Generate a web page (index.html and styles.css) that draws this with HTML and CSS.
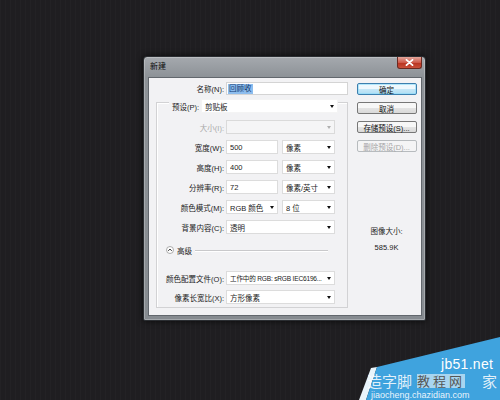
FILE: index.html
```html
<!DOCTYPE html>
<html lang="zh-CN">
<head>
<meta charset="utf-8">
<title>新建</title>
<link rel="stylesheet" href="styles.css">
</head>
<body>
<div class="desktop">
  <div class="dialog">
    <div class="titlebar">
      <span class="title">新建</span>
      <span class="close"><svg width="9" height="7" viewBox="0 0 9 7"><path d="M1.5 0.8 L7.5 6.2 M7.5 0.8 L1.5 6.2" stroke="#fff" stroke-width="1.8" stroke-linecap="round"/></svg></span>
    </div>
    <div class="client">
      <div class="form">
        <div class="name-row">
          <span class="lbl name-lbl">名称(N):</span>
          <div class="field name-field"><span class="hl">回顾收</span></div>
        </div>
        <div class="group">
          <div class="preset-row">
            <span class="preset-lbl">预设(P):</span>
            <div class="field select preset-select"><span class="val">剪贴板</span><i class="arrow"></i></div>
          </div>
          <div class="row first">
            <span class="lbl disabled">大小(I):</span>
            <div class="field select w109 off"><span class="val"></span><i class="arrow grey"></i></div>
          </div>
          <div class="row">
            <span class="lbl">宽度(W):</span>
            <div class="field w52"><span class="val">500</span></div>
            <div class="field select w53"><span class="val">像素</span><i class="arrow"></i></div>
          </div>
          <div class="row">
            <span class="lbl">高度(H):</span>
            <div class="field w52"><span class="val">400</span></div>
            <div class="field select w53"><span class="val">像素</span><i class="arrow"></i></div>
          </div>
          <div class="row">
            <span class="lbl">分辨率(R):</span>
            <div class="field w52"><span class="val">72</span></div>
            <div class="field select w53"><span class="val">像素/英寸</span><i class="arrow"></i></div>
          </div>
          <div class="row">
            <span class="lbl">颜色模式(M):</span>
            <div class="field select w52"><span class="val">RGB 颜色</span><i class="arrow"></i></div>
            <div class="field select w53"><span class="val">8 位</span><i class="arrow"></i></div>
          </div>
          <div class="row">
            <span class="lbl">背景内容(C):</span>
            <div class="field select w109"><span class="val">透明</span><i class="arrow"></i></div>
          </div>
          <div class="adv">
            <span class="adv-icon"><svg width="8" height="8" viewBox="0 0 8 8"><circle cx="4" cy="4" r="3.5" fill="#fff" stroke="#9a9a9a" stroke-width="0.8"/><path d="M2.3 4.8 L4 3.1 L5.7 4.8" fill="none" stroke="#222" stroke-width="1"/></svg></span>
            <span class="adv-text">高级</span>
            <span class="adv-line"></span>
          </div>
          <div class="row profile">
            <span class="lbl">颜色配置文件(O):</span>
            <div class="field select w109"><span class="val tight">工作中的 RGB: sRGB IEC6196...</span><i class="arrow"></i></div>
          </div>
          <div class="row aspect">
            <span class="lbl">像素长宽比(X):</span>
            <div class="field select w109"><span class="val">方形像素</span><i class="arrow"></i></div>
          </div>
        </div>
      </div>
      <div class="side">
        <div class="btn default">确定</div>
        <div class="btn">取消</div>
        <div class="btn">存储预设(S)...</div>
        <div class="btn off">删除预设(D)...</div>
        <div class="info">图像大小:</div>
        <div class="info size">585.9K</div>
      </div>
    </div>
  </div>
</div>
<div class="wm">
  <svg class="wm-shape" width="145" height="65" viewBox="0 0 145 65">
    <polygon points="4,65 16,33 22,32 11,65" fill="#e9f4fb"/>
    <polygon points="11,65 22,32 145,2 145,65" fill="#3fa3de"/>
  </svg>
  <span class="wm-url">jb51.net</span>
  <span class="wm-big">造字脚</span>
  <span class="wm-mid">教程网</span>
  <span class="wm-big2">家</span>
  <span class="wm-small">jiaocheng.chazidian.com</span>
</div>
</body>
</html>
```

FILE: styles.css
```css
* { box-sizing: border-box; margin: 0; padding: 0; }
html, body { width: 500px; height: 400px; overflow: hidden; }
body {
  position: relative;
  background-color: #1f1e21;
  background-image: repeating-linear-gradient(90deg, rgba(255,255,255,0.018) 0 1px, transparent 1px 5px);
  font-family: "Liberation Sans", "Noto Sans CJK SC", sans-serif;
  font-size: 7.5px;
  color: #1c1c1c;
}
.desktop { padding: 56px 0 0 143px; }
.dialog {
  width: 283px;
  height: 265px;
  border: 1px solid #2a2d31;
  border-radius: 4px 4px 2px 2px;
  background: linear-gradient(#a5a9ae, #8d9297 20px, #868b90);
  padding: 0 3px 4px 4px;
  display: flex;
  flex-direction: column;
  box-shadow: 0 0 6px rgba(0,0,0,0.7), inset 0 0 0 1px rgba(255,255,255,0.25);
}
.titlebar {
  height: 20px;
  display: flex;
  justify-content: space-between;
  align-items: flex-start;
  padding-left: 2px;
}
.title { line-height: 19px; font-size: 8px; color: #0c0c0c; }
.close {
  width: 25px;
  height: 12px;
  display: flex;
  align-items: center;
  justify-content: center;
  background: linear-gradient(#e3a79c, #cf5a4a 50%, #b8321f 51%, #c9503a);
  border: 1px solid #6a2a22;
  border-top: none;
  border-radius: 0 0 3px 3px;
}
.client {
  flex: 1;
  display: flex;
  background: #f2f2f4;
  border: 1px solid #62676d;
}
.form { width: 203px; }
.name-row {
  display: flex;
  align-items: center;
  height: 13px;
  margin-top: 4px;
}
.lbl { text-align: right; margin-right: 2px; white-space: nowrap; }
.name-lbl { width: 75px; }
.field {
  height: 14px;
  background: #fff;
  border: 1px solid #dcdcdc;
  display: flex;
  align-items: center;
  padding: 0 3px;
  white-space: nowrap;
  overflow: hidden;
}
.val { flex: 1; min-width: 0; overflow: hidden; white-space: nowrap; }
.val.tight { font-size: 6.6px; letter-spacing: -0.2px; }
.name-field { width: 122px; height: 13px; border-color: #d4d4d4; padding-left: 1px; }
.hl { background: #8dbdee; color: #123a6e; padding: 0 1px; line-height: 10px; }
.select { justify-content: space-between; }
.arrow {
  flex: none;
  width: 0;
  height: 0;
  margin-left: 2px;
  border-left: 2.5px solid transparent;
  border-right: 2.5px solid transparent;
  border-top: 3px solid #111;
}
.arrow.grey { border-top-color: #b0b0b0; }
.group {
  margin: 7px 0 0 7px;
  width: 192px;
  height: 206px;
  border: 1px solid #d2d2d4;
  box-shadow: inset 1px 1px 0 #fff;
}
.preset-row {
  display: flex;
  align-items: center;
  height: 14px;
  margin-top: -4px;
  padding-left: 12px;
}
.preset-lbl { width: 32px; background: #f2f2f4; padding-left: 3px; white-space: nowrap; }
.preset-select { width: 137px; border-color: #f4f4f4; }
.row { display: flex; align-items: center; height: 14px; margin-top: 6px; }
.row .lbl { width: 67px; }
.row.first { margin-top: 7px; }
.row.profile { margin-top: 14px; }
.row.aspect { margin-top: 5px; }
.disabled { color: #a8a8a8; }
.off { background: #f5f5f6; border-color: #dadada; color: #a8a8a8; }
.w52 { width: 52px; }
.w53 { width: 53px; margin-left: 4px; }
.w109 { width: 109px; }
.adv {
  display: flex;
  align-items: center;
  height: 14px;
  margin-top: 9px;
  padding-left: 9px;
  padding-right: 19px;
}
.adv-icon { display: flex; width: 8px; height: 8px; }
.adv-text { margin-left: 3px; }
.adv-line { flex: 1; height: 1px; background: #c9c9cb; margin-left: 3px; box-shadow: 0 1px 0 #fff; }
.side {
  width: 69px;
  display: flex;
  flex-direction: column;
  align-items: center;
  padding-top: 5px;
}
.btn {
  width: 60px;
  height: 12px;
  margin-bottom: 7px;
  border: 1px solid #777;
  border-radius: 2px;
  background: linear-gradient(#f7f7f7 45%, #e4e4e4 50%, #d9d9d9);
  display: flex;
  align-items: center;
  justify-content: center;
  white-space: nowrap;
  color: #111;
}
.btn.default {
  border-color: #3d7fae;
  background: linear-gradient(#eef8fd 45%, #c6e8f8 50%, #b2def3);
  box-shadow: inset 0 0 0 1px rgba(140,220,250,0.6);
}
.btn.off {
  border-color: #b7bbbe;
  background: #f4f4f5;
  color: #a5a5a5;
}
.info { margin-top: 67px; line-height: 12px; text-align: center; }
.info.size { margin-top: 4px; }

.wm { position: absolute; left: 355px; top: 335px; width: 145px; height: 65px; overflow: hidden; }
.wm-shape { position: absolute; left: 0; top: 0; }
.wm-url { position: absolute; left: 86px; top: 22px; font-size: 14px; line-height: 14px; color: #fff; letter-spacing: 0.3px; }
.wm-big { position: absolute; left: 12px; top: 37px; font-size: 15px; line-height: 17px; color: rgba(255,255,255,0.85); font-family: "Noto Sans CJK SC", sans-serif; }
.wm-mid { position: absolute; left: 62px; top: 39px; font-size: 13px; line-height: 14px; color: #555; letter-spacing: 3px; background: rgba(255,255,255,0.55); font-family: "Noto Sans CJK SC", sans-serif; }
.wm-big2 { position: absolute; left: 127px; top: 37px; font-size: 15px; line-height: 17px; color: rgba(255,255,255,0.85); font-family: "Noto Sans CJK SC", sans-serif; }
.wm-small { position: absolute; left: 16px; top: 55px; font-size: 9px; line-height: 10px; color: rgba(255,255,255,0.9); }
```
